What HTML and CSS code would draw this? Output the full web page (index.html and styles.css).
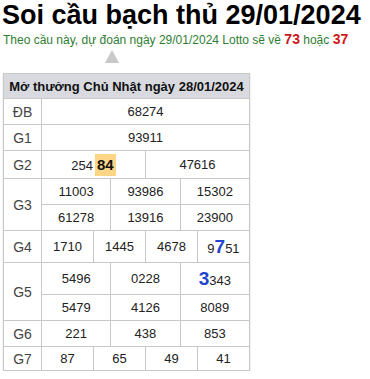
FILE: index.html
```html
<!DOCTYPE html>
<html lang="vi">
<head>
<meta charset="utf-8">
<title>Soi cầu bạch thủ 29/01/2024</title>
<link rel="stylesheet" href="styles.css">
</head>
<body>
<h1 class="title">Soi cầu bạch thủ 29/01/2024</h1>
<p class="sub">Theo cầu này, dự đoán ngày 29/01/2024 Lotto sẽ về <b class="red">73</b> hoặc <b class="red">37</b></p>
<div class="arrow-wrap"><span class="arrow"></span></div>
<table class="kq">
  <colgroup>
    <col class="c-lbl">
    <col class="c"><col class="c"><col class="c"><col class="c"><col class="c"><col class="c">
    <col class="c"><col class="c"><col class="c"><col class="c"><col class="c"><col class="c">
  </colgroup>
  <tr class="h25"><th colspan="13" class="head">Mở thưởng Chủ Nhật ngày 28/01/2024</th></tr>
  <tr class="h26"><td class="lbl">ĐB</td><td colspan="12">68274</td></tr>
  <tr class="h26"><td class="lbl">G1</td><td colspan="12">93911</td></tr>
  <tr class="h28"><td class="lbl">G2</td><td colspan="6">254<span class="hl">84</span></td><td colspan="6">47616</td></tr>
  <tr class="h26"><td class="lbl" rowspan="2">G3</td><td colspan="4">11003</td><td colspan="4">93986</td><td colspan="4">15302</td></tr>
  <tr class="h26"><td colspan="4">61278</td><td colspan="4">13916</td><td colspan="4">23900</td></tr>
  <tr class="h32"><td class="lbl">G4</td><td colspan="3">1710</td><td colspan="3">1445</td><td colspan="3">4678</td><td colspan="3">9<span class="big">7</span>51</td></tr>
  <tr class="h32"><td class="lbl" rowspan="2">G5</td><td colspan="4">5496</td><td colspan="4">0228</td><td colspan="4"><span class="big">3</span>343</td></tr>
  <tr class="h26"><td colspan="4">5479</td><td colspan="4">4126</td><td colspan="4">8089</td></tr>
  <tr class="h26"><td class="lbl">G6</td><td colspan="4">221</td><td colspan="4">438</td><td colspan="4">853</td></tr>
  <tr class="h24"><td class="lbl">G7</td><td colspan="3">87</td><td colspan="3">65</td><td colspan="3">49</td><td colspan="3">41</td></tr>
</table>
</body>
</html>
```
FILE: styles.css
```css
html, body {
  margin: 0;
  padding: 0;
  background: #fff;
  font-family: "Liberation Sans", Arial, sans-serif;
  color: #222;
}
.title {
  margin: 0;
  padding-left: 2px;
  font-size: 27px;
  line-height: 31px;
  font-weight: bold;
  color: #000;
}
.sub {
  margin: 0;
  padding-left: 3px;
  font-size: 12px;
  line-height: 16px;
  color: #2f7d32;
}
.red {
  color: #d01818;
  font-size: 14px;
}
.arrow-wrap {
  height: 25px;
  padding-top: 2px;
  box-sizing: border-box;
}
.arrow {
  display: block;
  margin-left: 105px;
  width: 0;
  height: 0;
  border-left: 7px solid transparent;
  border-right: 7px solid transparent;
  border-bottom: 13px solid #c8c8c8;
}
.kq {
  margin-left: 3px;
  border-collapse: collapse;
  table-layout: fixed;
  width: 247px;
  font-size: 13px;
  box-shadow: 0 1px 2px rgba(0,0,0,0.15);
}
.c-lbl { width: 38px; }
.kq th, .kq td {
  border: 1px solid #c8c8c8;
  padding: 0;
  text-align: center;
  vertical-align: middle;
  white-space: nowrap;
}
.head {
  background: #d9dadf;
  font-weight: bold;
  font-size: 13px;
  color: #111;
}
.lbl {
  color: #444;
  font-size: 14px;
}
.h25 { height: 25px; }
.h26 { height: 26px; }
.h28 { height: 28px; }
.h32 { height: 32px; }
.h24 { height: 24px; }
.hl {
  display: inline-block;
  margin-left: 2px;
  padding: 3px 2px;
  line-height: 16px;
  background: #fdd586;
  font-weight: bold;
  font-size: 15px;
  color: #111;
}
.big {
  font-weight: bold;
  font-size: 19px;
  color: #2244cc;
}
```
